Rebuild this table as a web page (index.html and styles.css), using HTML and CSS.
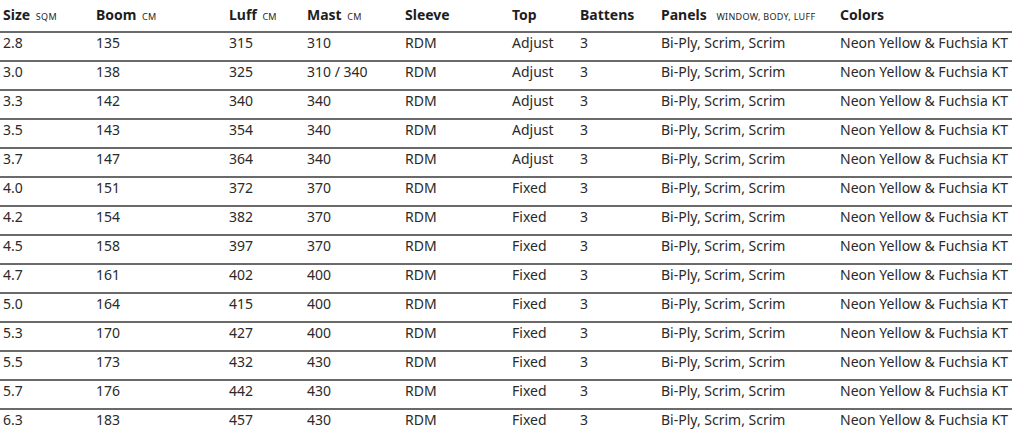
FILE: index.html
```html
<!DOCTYPE html>
<html>
<head>
<meta charset="utf-8">
<link rel="stylesheet" href="styles.css">
</head>
<body>
<table class="specs">
<colgroup>
<col class="c-size"><col class="c-boom"><col class="c-luff"><col class="c-mast"><col class="c-sleeve"><col class="c-top"><col class="c-batt"><col class="c-panels"><col class="c-colors">
</colgroup>
<thead>
<tr>
<th>Size <span class="unit">SQM</span></th>
<th>Boom <span class="unit">CM</span></th>
<th>Luff <span class="unit">CM</span></th>
<th>Mast <span class="unit">CM</span></th>
<th>Sleeve</th>
<th>Top</th>
<th>Battens</th>
<th>Panels <span class="unit wide">WINDOW, BODY, LUFF</span></th>
<th>Colors</th>
</tr>
</thead>
<tbody>
<tr><td>2.8</td><td>135</td><td>315</td><td>310</td><td>RDM</td><td>Adjust</td><td>3</td><td>Bi-Ply, Scrim, Scrim</td><td>Neon Yellow &amp; Fuchsia KT</td></tr>
<tr><td>3.0</td><td>138</td><td>325</td><td>310 / 340</td><td>RDM</td><td>Adjust</td><td>3</td><td>Bi-Ply, Scrim, Scrim</td><td>Neon Yellow &amp; Fuchsia KT</td></tr>
<tr><td>3.3</td><td>142</td><td>340</td><td>340</td><td>RDM</td><td>Adjust</td><td>3</td><td>Bi-Ply, Scrim, Scrim</td><td>Neon Yellow &amp; Fuchsia KT</td></tr>
<tr><td>3.5</td><td>143</td><td>354</td><td>340</td><td>RDM</td><td>Adjust</td><td>3</td><td>Bi-Ply, Scrim, Scrim</td><td>Neon Yellow &amp; Fuchsia KT</td></tr>
<tr><td>3.7</td><td>147</td><td>364</td><td>340</td><td>RDM</td><td>Adjust</td><td>3</td><td>Bi-Ply, Scrim, Scrim</td><td>Neon Yellow &amp; Fuchsia KT</td></tr>
<tr><td>4.0</td><td>151</td><td>372</td><td>370</td><td>RDM</td><td>Fixed</td><td>3</td><td>Bi-Ply, Scrim, Scrim</td><td>Neon Yellow &amp; Fuchsia KT</td></tr>
<tr><td>4.2</td><td>154</td><td>382</td><td>370</td><td>RDM</td><td>Fixed</td><td>3</td><td>Bi-Ply, Scrim, Scrim</td><td>Neon Yellow &amp; Fuchsia KT</td></tr>
<tr><td>4.5</td><td>158</td><td>397</td><td>370</td><td>RDM</td><td>Fixed</td><td>3</td><td>Bi-Ply, Scrim, Scrim</td><td>Neon Yellow &amp; Fuchsia KT</td></tr>
<tr><td>4.7</td><td>161</td><td>402</td><td>400</td><td>RDM</td><td>Fixed</td><td>3</td><td>Bi-Ply, Scrim, Scrim</td><td>Neon Yellow &amp; Fuchsia KT</td></tr>
<tr><td>5.0</td><td>164</td><td>415</td><td>400</td><td>RDM</td><td>Fixed</td><td>3</td><td>Bi-Ply, Scrim, Scrim</td><td>Neon Yellow &amp; Fuchsia KT</td></tr>
<tr><td>5.3</td><td>170</td><td>427</td><td>400</td><td>RDM</td><td>Fixed</td><td>3</td><td>Bi-Ply, Scrim, Scrim</td><td>Neon Yellow &amp; Fuchsia KT</td></tr>
<tr><td>5.5</td><td>173</td><td>432</td><td>430</td><td>RDM</td><td>Fixed</td><td>3</td><td>Bi-Ply, Scrim, Scrim</td><td>Neon Yellow &amp; Fuchsia KT</td></tr>
<tr><td>5.7</td><td>176</td><td>442</td><td>430</td><td>RDM</td><td>Fixed</td><td>3</td><td>Bi-Ply, Scrim, Scrim</td><td>Neon Yellow &amp; Fuchsia KT</td></tr>
<tr><td>6.3</td><td>183</td><td>457</td><td>430</td><td>RDM</td><td>Fixed</td><td>3</td><td>Bi-Ply, Scrim, Scrim</td><td>Neon Yellow &amp; Fuchsia KT</td></tr>
</tbody>
</table>
</body>
</html>
```
FILE: styles.css
```css
html, body {
  margin: 0;
  padding: 0;
  background: #fff;
}
body {
  font-family: "Noto Sans", "DejaVu Sans", sans-serif;
  color: #2a2a2a;
}
.specs {
  border-collapse: collapse;
  table-layout: fixed;
  width: 1012px;
  font-size: 14px;
  line-height: 20px;
}
.c-size { width: 93px; }
.c-boom { width: 133px; }
.c-luff { width: 78px; }
.c-mast { width: 98px; }
.c-sleeve { width: 107px; }
.c-top { width: 68px; }
.c-batt { width: 81px; }
.c-panels { width: 179px; }
.c-colors { width: auto; }
.specs th, .specs td {
  text-align: left;
  white-space: nowrap;
  vertical-align: top;
}
.specs th {
  font-weight: 700;
  padding: 5px 0 4px 3px;
  color: #1e1e1e;
}
.specs td {
  padding: 0 0 7px 3px;
  border-top: 2px solid #6a6a6a;
}
.unit {
  font-size: 9px;
  font-weight: 400;
  letter-spacing: 0.3px;
  margin-left: 2px;
}
.unit.wide {
  margin-left: 6px;
}
```
